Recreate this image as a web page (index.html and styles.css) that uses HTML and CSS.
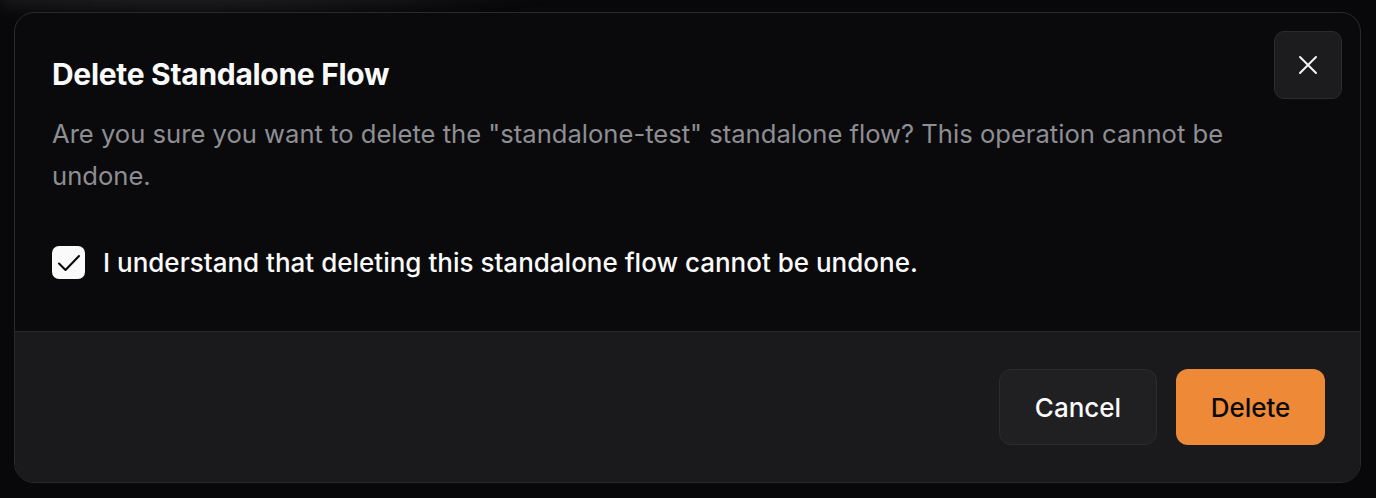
FILE: index.html
```html
<!DOCTYPE html>
<html lang="en">
<head>
    <meta charset="UTF-8">
    <title>Delete Standalone Flow</title>
    <link rel="stylesheet" href="styles.css">
</head>
<body>
    <div class="backdrop"></div>

    <div class="dialog" role="dialog">
        <button class="close-btn" aria-label="Close">
            <svg width="20" height="20" viewBox="0 0 20 20" fill="none" stroke="currentColor" stroke-width="2" stroke-linecap="round">
                <path d="M2 2l16 16M18 2L2 18"/>
            </svg>
        </button>

        <div class="dialog-body">
            <h2 class="dialog-title">Delete Standalone Flow</h2>
            <p class="dialog-text">Are you sure you want to delete the "standalone-test" standalone flow? This operation cannot be undone.</p>

            <label class="confirm">
                <span class="checkbox">
                    <svg width="24" height="24" viewBox="0 0 24 24" fill="none" stroke="currentColor" stroke-width="2.1" stroke-linecap="round" stroke-linejoin="round">
                        <path d="M2 12.5l6.5 6.5L22 5"/>
                    </svg>
                </span>
                <span>I understand that deleting this standalone flow cannot be undone.</span>
            </label>
        </div>

        <div class="dialog-footer">
            <button class="btn btn-secondary">Cancel</button>
            <button class="btn btn-danger">Delete</button>
        </div>
    </div>
</body>
</html>
```

FILE: styles.css
```css
* {
    margin: 0;
    padding: 0;
    box-sizing: border-box;
}

body {
    font-family: Inter, "Noto Sans", sans-serif;
    background: #08080a;
    color: #fafafa;
    padding: 12px 15px 0 14px;
    height: 498px;
    overflow: hidden;
    position: relative;
}

/* page behind the modal, mostly hidden */
.backdrop {
    position: absolute;
    top: -20px;
    left: 0;
    width: 600px;
    height: 40px;
    background: radial-gradient(ellipse at 30% 0%, rgba(120, 120, 125, 0.35), transparent 70%);
    filter: blur(6px);
}

.dialog {
    position: relative;
    background: #0a0a0c;
    border: 1px solid #2a2a2d;
    border-radius: 20px;
    overflow: hidden;
}

.close-btn {
    position: absolute;
    top: 18px;
    right: 18px;
    width: 68px;
    height: 68px;
    display: flex;
    align-items: center;
    justify-content: center;
    background: #1c1c1e;
    border: 1px solid #2c2c2f;
    border-radius: 10px;
    color: #f4f4f5;
    cursor: pointer;
}

.dialog-body {
    padding: 43px 37px 52px;
}

.dialog-title {
    font-size: 30px;
    line-height: 36px;
    font-weight: 700;
    letter-spacing: -0.3px;
}

.dialog-text {
    margin-top: 21px;
    font-size: 25.6px;
    line-height: 42px;
    color: #8e8e93;
    max-width: 1240px;
}

.confirm {
    margin-top: 49px;
    display: flex;
    align-items: center;
    gap: 18px;
    font-size: 26px;
    font-weight: 500;
    cursor: pointer;
}

.checkbox {
    width: 33px;
    height: 33px;
    border-radius: 7px;
    background: #fafafa;
    color: #0a0a0c;
    display: flex;
    align-items: center;
    justify-content: center;
}

.dialog-footer {
    background: #1a1a1c;
    border-top: 1px solid #2a2a2d;
    padding: 37px 35px 37px;
    display: flex;
    justify-content: flex-end;
    gap: 19px;
}

.btn {
    height: 76px;
    border-radius: 12px;
    font-family: inherit;
    font-size: 26px;
    font-weight: 500;
    cursor: pointer;
}

.btn-secondary {
    background: #202022;
    border: 1px solid #2c2c2f;
    color: #fafafa;
    width: 158px;
}

.btn-danger {
    background: #ee8a37;
    border: none;
    color: #0a0a0a;
    width: 149px;
}
```
